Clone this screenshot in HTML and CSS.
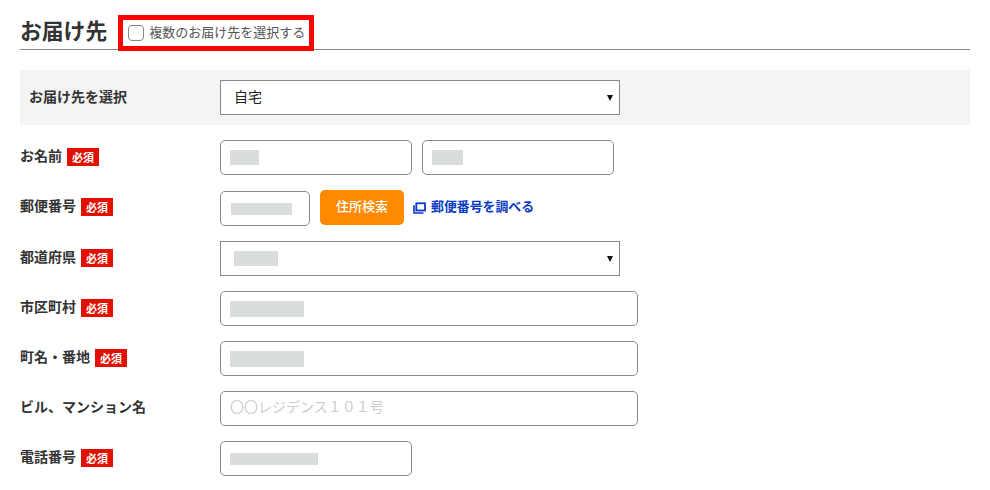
FILE: index.html
```html
<!DOCTYPE html>
<html lang="ja">
<head>
<meta charset="utf-8">
<title>お届け先</title>
<link rel="stylesheet" href="styles.css">
</head>
<body>
<main class="page">
  <header class="head">
    <h2 class="title">お届け先</h2>
    <label class="multi">
      <input type="checkbox" class="check">
      <span class="raise">複数のお届け先を選択する</span>
    </label>
  </header>

  <div class="row row-shaded">
    <div class="label"><span class="raise">お届け先を選択</span></div>
    <div class="select w400"><span class="select-text raise">自宅</span><i class="arrow"></i></div>
  </div>

  <div class="row">
    <div class="label"><span class="raise">お名前</span><span class="req">必須</span></div>
    <div class="fields">
      <div class="field w192"><span class="mask m-name1"></span></div>
      <div class="field w192"><span class="mask m-name2"></span></div>
    </div>
  </div>

  <div class="row row-zip">
    <div class="label"><span class="raise">郵便番号</span><span class="req">必須</span></div>
    <div class="fields">
      <div class="field w90 zip"><span class="mask m-zip"></span></div>
      <button class="search" type="button"><span class="raise">住所検索</span></button>
      <a class="zip-link" href="#">
        <svg class="link-icon" width="13" height="12" viewBox="0 0 13 12" aria-hidden="true">
          <path d="M1 3.2V11h9.5" fill="none" stroke="#0a3bc4" stroke-width="1.6"/>
          <rect x="3.3" y="1.3" width="8.7" height="7.2" fill="none" stroke="#0a3bc4" stroke-width="1.8"/>
        </svg>
        <span class="raise">郵便番号を調べる</span>
      </a>
    </div>
  </div>

  <div class="row">
    <div class="label"><span class="raise">都道府県</span><span class="req">必須</span></div>
    <div class="select w400"><span class="mask m-pref"></span><i class="arrow"></i></div>
  </div>

  <div class="row">
    <div class="label"><span class="raise">市区町村</span><span class="req">必須</span></div>
    <div class="field w418"><span class="mask m-addr"></span></div>
  </div>

  <div class="row">
    <div class="label"><span class="raise">町名・番地</span><span class="req">必須</span></div>
    <div class="field w418"><span class="mask m-addr"></span></div>
  </div>

  <div class="row">
    <div class="label"><span class="raise">ビル、マンション名</span></div>
    <input class="field w418 text" type="text" placeholder="〇〇レジデンス１０１号">
  </div>

  <div class="row">
    <div class="label"><span class="raise">電話番号</span><span class="req">必須</span></div>
    <div class="field w192"><span class="mask m-tel"></span></div>
  </div>
</main>
</body>
</html>
```
FILE: styles.css
```css
* { box-sizing: border-box; }
html, body { margin: 0; padding: 0; background: #fff; }
body {
  font-family: "Noto Sans CJK JP", "Noto Sans", sans-serif;
  color: #333;
  width: 990px;
  height: 490px;
  overflow: hidden;
}
.page { padding: 15px 20px 0; }

/* Noto's metrics sit lower in the line box than the reference's face */
.raise { display: block; padding-bottom: 4px; }
.label .raise { padding-bottom: 5px; }
.row-shaded .label .raise { padding-bottom: 3px; }

.head {
  display: flex;
  align-items: center;
  height: 34px;
  box-shadow: 0 1px 0 #888;
  margin-bottom: 21px;
}
.title {
  margin: 0 11px 0 0;
  padding-bottom: 5px;
  font-size: 21.8px;
  line-height: 32px;
  font-weight: 700;
  color: #333;
}
.multi {
  display: flex;
  align-items: center;
  gap: 5px;
  align-self: flex-start;
  height: 36px;
  padding-left: 5px;
  width: 196px;
  border: 5px solid #f00;
  background: #fff;
  font-size: 13px;
  color: #555;
}
.check {
  appearance: none;
  margin: 0;
  width: 16px;
  height: 16px;
  border: 1px solid #888;
  border-radius: 4px;
  background: #fff;
  flex: none;
}

.row {
  display: flex;
  align-items: center;
  height: 35px;
  margin-bottom: 15px;
}
.row-zip { height: 36px; align-items: flex-start; }
.row-zip .label { height: 35px; }
.row-shaded {
  height: 55px;
  background: #f4f4f4;
  padding-left: 9px;
}
.row-shaded .label { width: 191px; }

.label {
  display: flex;
  align-items: center;
  width: 200px;
  flex: none;
  font-size: 14px;
  font-weight: 700;
  color: #333;
}
.req {
  display: flex;
  align-items: center;
  justify-content: center;
  width: 32px;
  height: 18px;
  margin-left: 5px;
  margin-bottom: 1px;
  padding-bottom: 1px;
  background: #e31000;
  color: #fff;
  font-size: 11px;
  font-weight: 700;
}

.fields { display: flex; align-items: flex-start; gap: 10px; }

.field {
  display: flex;
  align-items: center;
  height: 35px;
  padding: 0 9px;
  border: 1px solid #888;
  border-radius: 5px;
  background: #fff;
}
.zip { margin-top: 1px; padding-left: 10px; }
.text {
  font-family: inherit;
  font-size: 14px;
  padding-bottom: 5px;
  color: #333;
  outline: 0;
}
.text::placeholder { color: #ccc; opacity: 1; }

.select {
  display: flex;
  align-items: center;
  justify-content: space-between;
  height: 35px;
  padding: 0 6px 0 13px;
  border: 1px solid #888;
  background: #fff;
  font-size: 14px;
  color: #222;
}
.arrow {
  width: 0;
  height: 0;
  border-left: 3px solid transparent;
  border-right: 3px solid transparent;
  border-top: 6px solid #111;
}

.w90 { width: 90px; }
.w192 { width: 192px; }
.w400 { width: 400px; }
.w418 { width: 418px; }

.mask { display: block; background: #dadddd; }
.m-name1 { width: 29px; height: 15px; margin-top: -1px; }
.m-name2 { width: 31px; height: 15px; margin-top: -1px; }
.m-zip { width: 61px; height: 12px; }
.m-pref { width: 44px; height: 15px; }
.m-addr { width: 74px; height: 16px; }
.m-tel { width: 88px; height: 12px; }

.search {
  width: 84px;
  height: 35px;
  border: 0;
  border-radius: 5px;
  background: #ff8a00;
  color: #fff;
  font-family: inherit;
  font-size: 13px;
  font-weight: 500;
  padding: 0;
}
.zip-link {
  display: flex;
  align-items: center;
  height: 35px;
  gap: 5px;
  margin-left: -1px;
  color: #0a3bc4;
  font-size: 12.9px;
  font-weight: 700;
  text-decoration: none;
}
```
